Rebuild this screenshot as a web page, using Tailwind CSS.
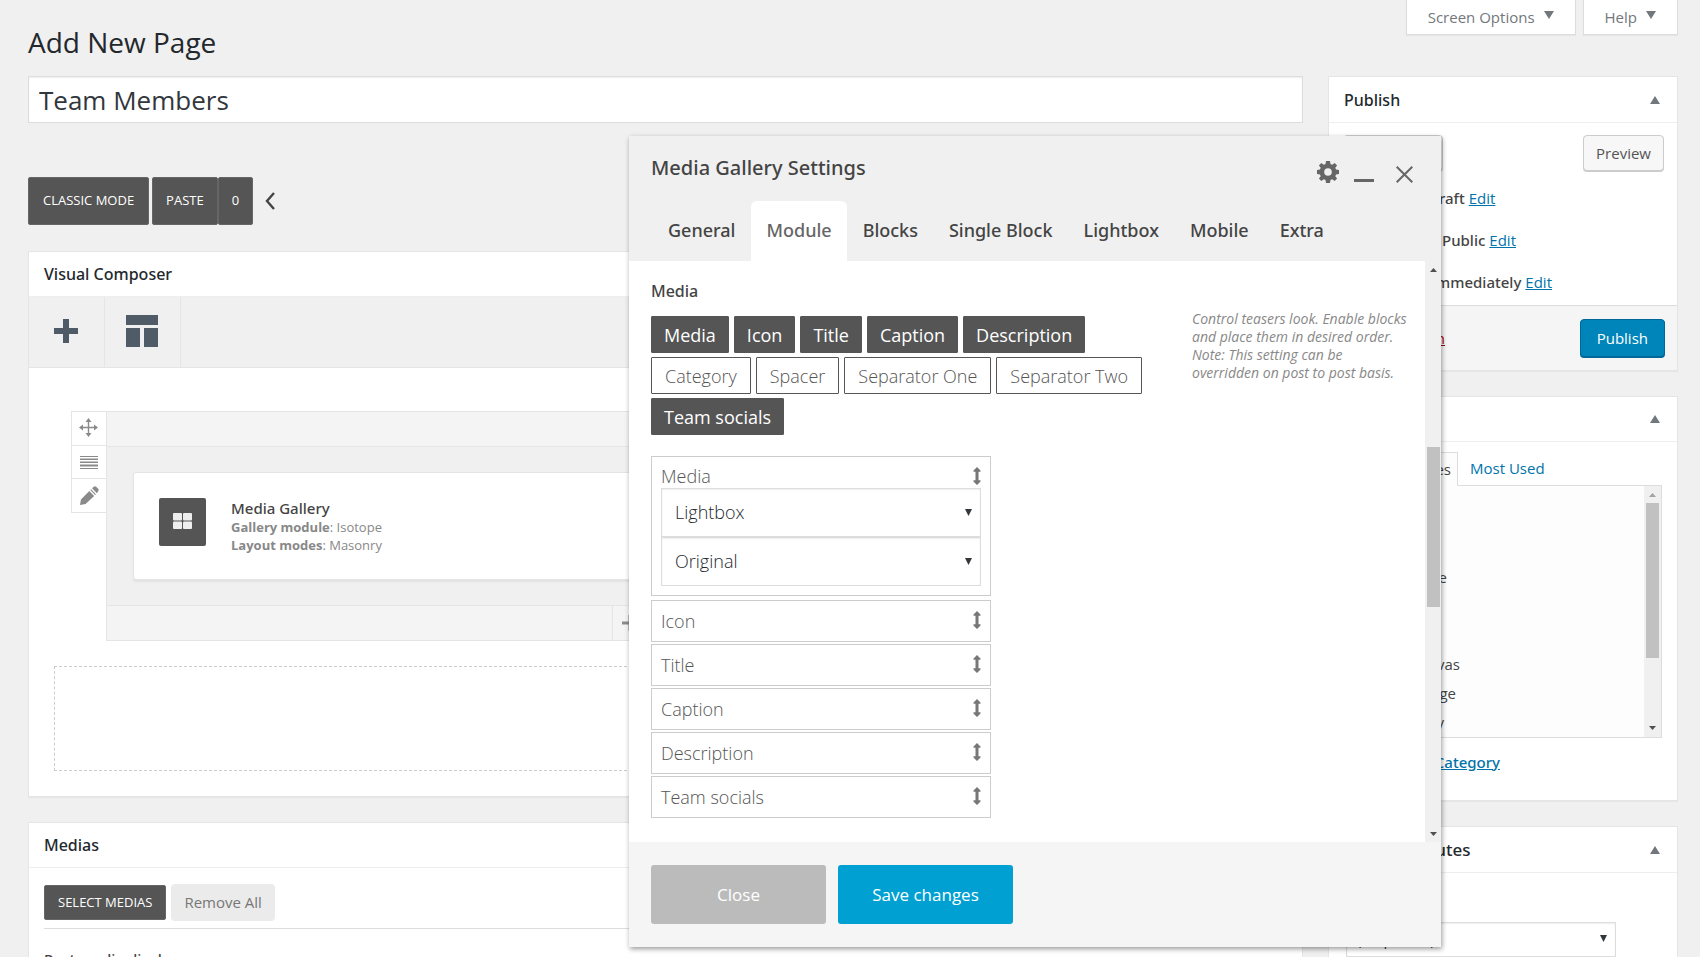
<!DOCTYPE html>
<html lang="en">
<head>
<meta charset="utf-8">
<meta name="viewport" content="width=device-width, initial-scale=1">
<title>Add New Page</title>
<script src="https://cdn.jsdelivr.net/npm/@tailwindcss/browser@4"></script>
</head>
<body class="bg-[#f0f0f0] font-['Open_Sans',sans-serif] text-[#444]">
<svg class="hidden">
  <symbol id="down" viewBox="0 0 10 8"><path d="M0 0h10L5 8z" fill="currentColor"/></symbol>
  <symbol id="up" viewBox="0 0 10 8"><path d="M0 8h10L5 0z" fill="currentColor"/></symbol>
  <symbol id="updown" viewBox="0 0 8 18"><path d="M4 0l3.500 3.500v1.200h-2v8.600h2v1.200L4 18 .5 14.500v-1.200h2V4.700h-2V3.500z" fill="currentColor"/></symbol>
</svg>
<div class="relative h-screen overflow-hidden pl-7 pr-[22px]">
  <header class="flex h-[76px] items-start justify-between">
    <h1 class="pt-[22px] text-[28px] leading-10 text-[#23282d]">Add New Page</h1>
    <div class="flex gap-[7px] text-[15px] text-[#72777c]">
      <button class="flex h-[35px] items-center gap-[9px] border border-t-0 border-[#ddd] bg-white px-[21px] shadow-[0_1px_1px_rgba(0,0,0,0.04)]">Screen Options <svg class="mb-1 h-2 w-[10px]"><use href="#down"/></svg></button>
      <button class="flex h-[35px] items-center gap-[9px] border border-t-0 border-[#ddd] bg-white px-[21px] shadow-[0_1px_1px_rgba(0,0,0,0.04)]">Help <svg class="mb-1 h-2 w-[10px]"><use href="#down"/></svg></button>
    </div>
  </header>

  <div class="flex gap-[25px]">
    <main class="min-w-0 flex-1">
      <input aria-label="Page title" value="Team Members" class="block h-[47px] w-full border border-[#ddd] bg-white px-[10px] text-[26px] text-[#32373c] shadow-[inset_0_1px_2px_rgba(0,0,0,0.07)]">

      <div class="mt-[54px] flex h-12 items-stretch text-[13px] text-white">
        <button class="mr-[3px] rounded-xs border border-[#666] bg-[#555] px-[14px]">CLASSIC MODE</button>
        <button class="rounded-xs border border-[#666] bg-[#555] px-[13px]">PASTE</button>
        <button class="rounded-xs border border-[#666] bg-[#555] px-[13px]">0</button>
        <button aria-label="Collapse" class="ml-3 text-[#444]"><svg class="h-[18px] w-[10px]" viewBox="0 0 10 18"><path d="M9 1L2 9l7 8" fill="none" stroke="currentColor" stroke-width="2.4"/></svg></button>
      </div>

      <section class="mt-[26px] border border-[#e5e5e5] bg-white shadow-[0_1px_1px_rgba(0,0,0,0.04)]">
        <h2 class="flex h-[45px] items-center border-b border-[#eee] px-[15px] font-['Noto_Sans',sans-serif] text-base font-medium text-[#23282d]">Visual Composer</h2>
        <div class="flex h-[71px] border-b border-[#e5e5e5] bg-[#f0f0f0] text-[#4f5b66]">
          <button aria-label="Add element" class="grid w-[76px] place-items-center border-r border-[#e5e5e5] pb-[2px] pr-[2px]"><svg class="h-6 w-6" viewBox="0 0 24 24"><path d="M9 0h6v9h9v6h-9v9H9v-9H0V9h9z" fill="currentColor"/></svg></button>
          <button aria-label="Templates" class="grid w-[76px] place-items-center border-r border-[#e5e5e5] pb-[2px] pr-[2px]"><svg class="h-8 w-8" viewBox="0 0 32 32"><path d="M0 0h32v10H0zM0 13h14v19H0zM18 13h14v19H18z" fill="currentColor"/></svg></button>
        </div>
        <div class="px-[25px] pb-[25px] pt-[43px]">
          <div class="flex pl-[17px] pr-[53px]">
            <div class="w-[35px] text-[#8a8a8a]">
              <button aria-label="Move row" class="grid h-[35px] w-full place-items-center border border-r-0 border-[#e5e5e5] pb-[2px] pr-[2px]"><svg class="h-[19px] w-[19px]" viewBox="0 0 19 19"><path d="M9.500 0l3 4h-2.300v4.700H15V6.500l4 3-4 3v-2.200h-4.800V15h2.300l-3 4-3-4h2.300v-4.700H4v2.200l-4-3 4-3v2.200h4.800V4H6.500z" fill="currentColor"/></svg></button>
              <button aria-label="Row layout" class="grid h-8 w-full place-items-center border-l border-[#e5e5e5]"><svg class="h-[13px] w-[18px]" viewBox="0 0 18 13"><path d="M0 .5h18M0 3.500h18M0 6.500h18M0 9.500h18M0 12.500h18" stroke="currentColor"/><path d="M0 2.500h18M0 5.500h18M0 8.500h18M0 10.500h18" stroke="#c4c4c4"/></svg></button>
              <button aria-label="Edit row" class="grid h-[35px] w-full place-items-center border border-r-0 border-[#e5e5e5]"><svg class="h-[19px] w-[19px]" viewBox="0 0 18 18"><path d="M0 18l.9-5.300L8.800 4.800l4.600 4.600L5.300 17zM9.700 3.900l.8-.8 4.600 4.600-.8.8zM11.400 2.200L13 .7q1.200-1 2.300 0l1.900 1.900q1 1.100 0 2.300L16 6.800z" fill="currentColor"/></svg></button>
            </div>
            <div class="min-w-0 flex-1 border border-[#e5e5e5] bg-[#f0f0f0]">
              <div class="h-[35px] border-b border-[#e5e5e5] bg-[#f4f4f4]"></div>
              <div class="px-[26px] pb-[25px] pt-[25px]">
                <div class="flex h-[108px] items-center rounded-[3px] border border-[#e5e5e5] bg-white pl-[25px] shadow-[0_2px_2px_rgba(0,0,0,0.06)]">
                  <div class="mb-2 grid h-12 w-[47px] place-items-center rounded-xs bg-[#555] pb-[2px] text-[#eee]"><svg class="h-4 w-[19px]" viewBox="0 0 19 16"><g fill="currentColor"><rect width="9" height="7.500" rx="1"/><rect x="10" width="9" height="7.500" rx="1"/><rect y="8.500" width="9" height="7.500" rx="1"/><rect x="10" y="8.500" width="9" height="7.500" rx="1"/></g></svg></div>
                  <div class="ml-[25px] text-[13px] leading-[18px] text-[#888]">
                    <h3 class="font-['Noto_Sans',sans-serif] text-[15px] font-medium leading-5 text-[#444]">Media Gallery</h3>
                    <p><b>Gallery module</b>: Isotope</p>
                    <p><b>Layout modes</b>: Masonry</p>
                  </div>
                </div>
              </div>
              <div class="flex h-[35px] justify-center border-t border-[#e5e5e5] bg-[#f4f4f4] pr-[70px]">
                <button aria-label="Append element" class="grid w-9 place-items-center border-x border-[#e5e5e5] text-[#8a8a8a]"><svg class="h-4 w-4" viewBox="0 0 16 16"><path d="M8 0v16M0 8h16" stroke="currentColor" stroke-width="3"/></svg></button>
              </div>
            </div>
          </div>
          <div class="mt-[25px] h-[105px] border border-dashed border-[#ccc]"></div>
        </div>
      </section>

      <section class="mt-[25px] border border-[#e5e5e5] bg-white">
        <h2 class="flex h-[45px] items-center border-b border-[#eee] px-[15px] font-['Noto_Sans',sans-serif] text-base font-medium text-[#23282d]">Medias</h2>
        <div class="px-[15px] pt-4">
          <div class="flex items-center gap-[5px] border-b border-[#ddd] pb-[7px]">
            <button class="h-[35px] rounded-xs border border-[#666] bg-[#555] px-[13px] text-[13px] text-white">SELECT MEDIAS</button>
            <button class="h-[37px] rounded bg-[#ebebeb] px-[13px] text-[15px] text-[#777]">Remove All</button>
          </div>
          <h3 class="pt-[18px] font-['Noto_Sans',sans-serif] text-[15px] font-medium leading-6 text-[#444]">Post media display</h3>
        </div>
      </section>
    </main>

    <aside class="w-[350px] shrink-0 text-[15px]">
      <section class="border border-[#e5e5e5] bg-white shadow-[0_1px_1px_rgba(0,0,0,0.04)]">
        <div class="flex h-[46px] items-center justify-between border-b border-[#eee] pl-[15px] pr-[17px]">
          <h2 class="font-['Noto_Sans',sans-serif] text-base font-medium text-[#23282d]">Publish</h2>
          <button aria-label="Toggle Publish" class="text-[#72777c]"><svg class="h-2 w-[10px]"><use href="#up"/></svg></button>
        </div>
        <div class="flex justify-between pl-[14px] pr-[13px] pt-3 text-[#555]">
          <button class="h-9 w-[100px] rounded border border-[#ccc] bg-[#f7f7f7] shadow-[0_1px_0_#ccc]">Save Draft</button>
          <button class="h-9 rounded border border-[#ccc] bg-[#f7f7f7] px-3 shadow-[0_1px_0_#ccc]">Preview</button>
        </div>
        <div class="pb-px pl-[15px] pt-[6px]">
          <p class="flex h-[42px] items-center gap-1"><span class="w-[80px] text-right">Status:</span> <b class="font-['Noto_Sans',sans-serif] font-medium">Draft</b> <a href="#" class="text-[#0073aa] underline">Edit</a></p>
          <p class="flex h-[42px] items-center gap-1"><span class="w-[94px] text-right">Visibility:</span> <b class="font-['Noto_Sans',sans-serif] font-medium">Public</b> <a href="#" class="text-[#0073aa] underline">Edit</a></p>
          <p class="flex h-[43px] items-center gap-1"><span class="w-[84px] text-right">Publish</span> <b class="font-['Noto_Sans',sans-serif] font-medium">immediately</b> <a href="#" class="text-[#0073aa] underline">Edit</a></p>
        </div>
        <div class="flex h-[65px] items-center justify-between border-t border-[#ddd] bg-[#f5f5f5] pr-3">
          <a href="#" class="w-[116px] text-right text-[#a00] underline">Move to Trash</a>
          <button class="h-[38px] rounded border border-[#006799] bg-[#0085ba] px-4 text-white shadow-[0_1px_0_#006799]">Publish</button>
        </div>
      </section>

      <section class="mt-[25px] border border-[#e5e5e5] bg-white shadow-[0_1px_1px_rgba(0,0,0,0.04)]">
        <div class="flex h-[45px] items-center justify-between border-b border-[#eee] pl-[15px] pr-[17px]">
          <h2 class="font-['Noto_Sans',sans-serif] text-base font-medium text-[#23282d]">Categories</h2>
          <button aria-label="Toggle Categories" class="text-[#72777c]"><svg class="h-2 w-[10px]"><use href="#up"/></svg></button>
        </div>
        <div class="px-[15px] pb-[26px] pt-[10px]">
          <div class="flex">
            <button class="z-10 -mb-px h-[34px] w-[114px] border border-b-0 border-[#ddd] bg-[#fdfdfd] pr-[6px] text-right">All Categories</button>
            <button class="h-[33px] px-3 text-[#0073aa]">Most Used</button>
          </div>
          <div class="flex h-[253px] border border-[#ddd] bg-[#fdfdfd]">
            <div class="flex-1 pl-3 pt-[19px]">
              <label class="flex h-[29px] items-center justify-end pr-[215px]"><input type="checkbox" class="mr-2">Blog</label>
              <label class="flex h-[29px] items-center justify-end pr-[215px]"><input type="checkbox" class="mr-2">Shop</label>
              <label class="flex h-[29px] items-center justify-end pr-[197px]"><input type="checkbox" class="mr-2">Creative</label>
              <label class="flex h-[29px] items-center justify-end pr-[215px]"><input type="checkbox" class="mr-2">Design</label>
              <label class="flex h-[29px] items-center justify-end pr-[215px]"><input type="checkbox" class="mr-2">Music</label>
              <label class="flex h-[29px] items-center justify-end pr-[184px]"><input type="checkbox" class="mr-2">Canvas</label>
              <label class="flex h-[29px] items-center justify-end pr-[188px]"><input type="checkbox" class="mr-2">Image</label>
              <label class="flex h-[29px] items-center justify-end pr-[200px]"><input type="checkbox" class="mr-2">Gallery</label>
            </div>
            <div class="flex w-[17px] flex-col items-center bg-[#f0f0f0] py-[7px]">
              <svg class="h-1 w-[7px] text-[#a3a3a3]" viewBox="0 0 7 4"><path d="M0 4h7L3.500 0z" fill="currentColor"/></svg>
              <div class="mt-[6px] h-[155px] w-[13px] bg-[#c1c1c1]"></div>
              <svg class="mt-auto h-1 w-[7px] text-[#505050]" viewBox="0 0 7 4"><path d="M0 0h7L3.500 4z" fill="currentColor"/></svg>
            </div>
          </div>
          <a href="#" class="mt-3 flex w-[156px] justify-end whitespace-nowrap font-['Noto_Sans',sans-serif] font-medium leading-6 text-[#0073aa] underline">+ Add New Category</a>
        </div>
      </section>

      <section class="mt-[25px] border border-[#e5e5e5] bg-white">
        <div class="flex h-[46px] items-center justify-between border-b border-[#eee] pl-[15px] pr-[17px]">
          <h2 class="font-['Noto_Sans',sans-serif] text-[17px] font-medium text-[#23282d]">Page Attributes</h2>
          <button aria-label="Toggle Page Attributes" class="text-[#72777c]"><svg class="h-2 w-[10px]"><use href="#up"/></svg></button>
        </div>
        <div class="pl-[17px] pt-[13px]">
          <label for="parent" class="block h-9 font-semibold">Parent</label>
          <div class="relative w-[270px]">
            <select id="parent" class="h-[35px] w-full appearance-none border border-[#ddd] bg-white px-[10px] text-[#32373c] shadow-[inset_0_1px_2px_rgba(0,0,0,0.07)]"><option>(no parent)</option></select>
            <svg class="pointer-events-none absolute right-[9px] top-[13px] h-[7px] w-[7px] text-[#32373c]" viewBox="0 0 7 7"><path d="M0 0h7L3.500 7z" fill="currentColor"/></svg>
          </div>
        </div>
      </section>
    </aside>
  </div>

  <div role="dialog" aria-labelledby="dlg" class="absolute bottom-[10px] left-[37%] top-[136px] z-20 flex w-[812px] flex-col bg-[#f0f0f0] shadow-[1px_2px_5px_rgba(0,0,0,0.4)]">
    <div class="flex h-[65px] justify-between pl-[22px] pr-7">
      <h2 id="dlg" class="pt-4 font-['Noto_Sans',sans-serif] text-xl font-medium leading-8 text-[#444]">Media Gallery Settings</h2>
      <div class="flex items-start text-[#666]">
        <button aria-label="Settings" class="mt-[25px]"><svg class="h-[22px] w-[22px]" viewBox="0 0 22 22"><path fill-rule="evenodd" d="M9 0h4l.5 3 1.700.7L17.700 2l2.400 2.400-1.800 2.400.7 1.700 3 .5v4l-3 .5-.7 1.700 1.800 2.400-2.400 2.500-2.500-1.800-1.700.7-.5 3H9l-.5-3-1.700-.7-2.500 1.800-2.400-2.500 1.800-2.400-.7-1.700-3-.5V9l3-.5.7-1.700L1.900 4.400 4.300 2l2.500 1.700L8.500 3zM11 7.200a3.800 3.800 0 100 7.600 3.800 3.800 0 000-7.600z" fill="currentColor"/></svg></button>
        <button aria-label="Minimize" class="ml-[15px] mt-[43px] block h-[3px] w-5 bg-[#666]"></button>
        <button aria-label="Close dialog" class="ml-[22px] mt-[30px]"><svg class="h-[17px] w-[17px]" viewBox="0 0 17 17"><path d="M.7.7l15.600 15.600M16.300.7L.7 16.300" stroke="currentColor" stroke-width="2"/></svg></button>
      </div>
    </div>
    <div role="tablist" class="flex h-[60px] gap-px pl-6 font-['Noto_Sans',sans-serif] text-[18px] font-medium text-[#444]">
      <button role="tab" class="px-[15px] pb-[2px]">General</button>
      <button role="tab" aria-selected="true" class="rounded-t-md bg-white px-[15px] pb-[2px] text-[#666]">Module</button>
      <button role="tab" class="px-[15px] pb-[2px]">Blocks</button>
      <button role="tab" class="px-[15px] pb-[2px]">Single Block</button>
      <button role="tab" class="px-[15px] pb-[2px]">Lightbox</button>
      <button role="tab" class="px-[15px] pb-[2px]">Mobile</button>
      <button role="tab" class="px-[15px] pb-[2px]">Extra</button>
    </div>
    <div class="flex min-h-0 flex-1">
      <div class="flex flex-1 items-start justify-between bg-white pl-[22px] pr-4 pt-[18px] text-[18px] text-[#555]">
        <div class="w-[500px]">
          <h3 class="font-['Noto_Sans',sans-serif] text-base font-medium leading-6 text-[#444]">Media</h3>
          <div class="mt-[13px] flex flex-wrap gap-x-[5px] gap-y-1">
            <button class="h-[37px] rounded-[1px] border border-[#555] bg-[#555] px-3 pt-[2px] text-white">Media</button>
            <button class="h-[37px] rounded-[1px] border border-[#555] bg-[#555] px-3 pt-[2px] text-white">Icon</button>
            <button class="h-[37px] rounded-[1px] border border-[#555] bg-[#555] px-3 pt-[2px] text-white">Title</button>
            <button class="h-[37px] rounded-[1px] border border-[#555] bg-[#555] px-3 pt-[2px] text-white">Caption</button>
            <button class="h-[37px] rounded-[1px] border border-[#555] bg-[#555] px-3 pt-[2px] text-white">Description</button>
            <button class="h-[37px] rounded-[1px] border border-[#555] px-[13px] pt-[2px] font-light">Category</button>
            <button class="h-[37px] rounded-[1px] border border-[#555] px-[13px] pt-[2px] font-light">Spacer</button>
            <button class="h-[37px] rounded-[1px] border border-[#555] px-[13px] pt-[2px] font-light">Separator One</button>
            <button class="h-[37px] rounded-[1px] border border-[#555] px-[13px] pt-[2px] font-light">Separator Two</button>
            <button class="h-[37px] rounded-[1px] border border-[#555] bg-[#555] px-3 pt-[2px] text-white">Team socials</button>
          </div>
          <ul class="mt-[21px] flex w-[340px] flex-col gap-[2px] font-light">
            <li class="mb-[2px] border border-[#ccc] px-[9px] pb-[9px] pt-2">
              <div class="flex h-[23px] items-center justify-between">Media <svg class="mb-[2px] h-[18px] w-2 text-[#777]"><use href="#updown"/></svg></div>
              <div class="relative">
                <select aria-label="Media action" class="block h-[49px] w-full appearance-none border border-[#ddd] bg-white px-[13px] text-[#23282d] shadow-[inset_0_1px_2px_rgba(0,0,0,0.07)]"><option>Lightbox</option></select>
                <svg class="pointer-events-none absolute right-[9px] top-[21px] h-[7px] w-[7px] text-[#32373c]" viewBox="0 0 7 7"><path d="M0 0h7L3.500 7z" fill="currentColor"/></svg>
              </div>
              <div class="relative">
                <select aria-label="Media size" class="block h-[49px] w-full appearance-none border border-[#ddd] bg-white px-[13px] text-[#23282d] shadow-[inset_0_1px_2px_rgba(0,0,0,0.07)]"><option>Original</option></select>
                <svg class="pointer-events-none absolute right-[9px] top-[21px] h-[7px] w-[7px] text-[#32373c]" viewBox="0 0 7 7"><path d="M0 0h7L3.500 7z" fill="currentColor"/></svg>
              </div>
            </li>
            <li class="flex h-[42px] items-center justify-between border border-[#ccc] px-[9px]">Icon <svg class="mb-[2px] h-[18px] w-2 text-[#777]"><use href="#updown"/></svg></li>
            <li class="flex h-[42px] items-center justify-between border border-[#ccc] px-[9px]">Title <svg class="mb-[2px] h-[18px] w-2 text-[#777]"><use href="#updown"/></svg></li>
            <li class="flex h-[42px] items-center justify-between border border-[#ccc] px-[9px]">Caption <svg class="mb-[2px] h-[18px] w-2 text-[#777]"><use href="#updown"/></svg></li>
            <li class="flex h-[42px] items-center justify-between border border-[#ccc] px-[9px]">Description <svg class="mb-[2px] h-[18px] w-2 text-[#777]"><use href="#updown"/></svg></li>
            <li class="flex h-[42px] items-center justify-between border border-[#ccc] px-[9px]">Team socials <svg class="mb-[2px] h-[18px] w-2 text-[#777]"><use href="#updown"/></svg></li>
          </ul>
        </div>
        <p class="mt-[31px] w-[217px] text-[14px] italic leading-[18px] text-[#888]">Control teasers look. Enable blocks and place them in desired order. Note: This setting can be overridden on post to post basis.</p>
      </div>
      <div class="flex w-4 flex-col items-center pb-[6px] pt-[7px] text-[#505050]">
        <svg class="h-1 w-[7px]" viewBox="0 0 7 4"><path d="M0 4h7L3.500 0z" fill="currentColor"/></svg>
        <div class="mt-[175px] h-[160px] w-[13px] bg-[#c1c1c1]"></div>
        <svg class="mt-auto h-1 w-[7px]" viewBox="0 0 7 4"><path d="M0 0h7L3.500 4z" fill="currentColor"/></svg>
      </div>
    </div>
    <div class="flex h-[105px] items-start gap-3 bg-[#f5f5f5] pl-[22px] pt-[23px] text-[17px] text-white">
      <button class="h-[59px] w-[175px] rounded-[3px] bg-[#bbb]">Close</button>
      <button class="h-[59px] w-[175px] rounded-[3px] bg-[#00a0d2]">Save changes</button>
    </div>
  </div>
</div>
</body>
</html>
